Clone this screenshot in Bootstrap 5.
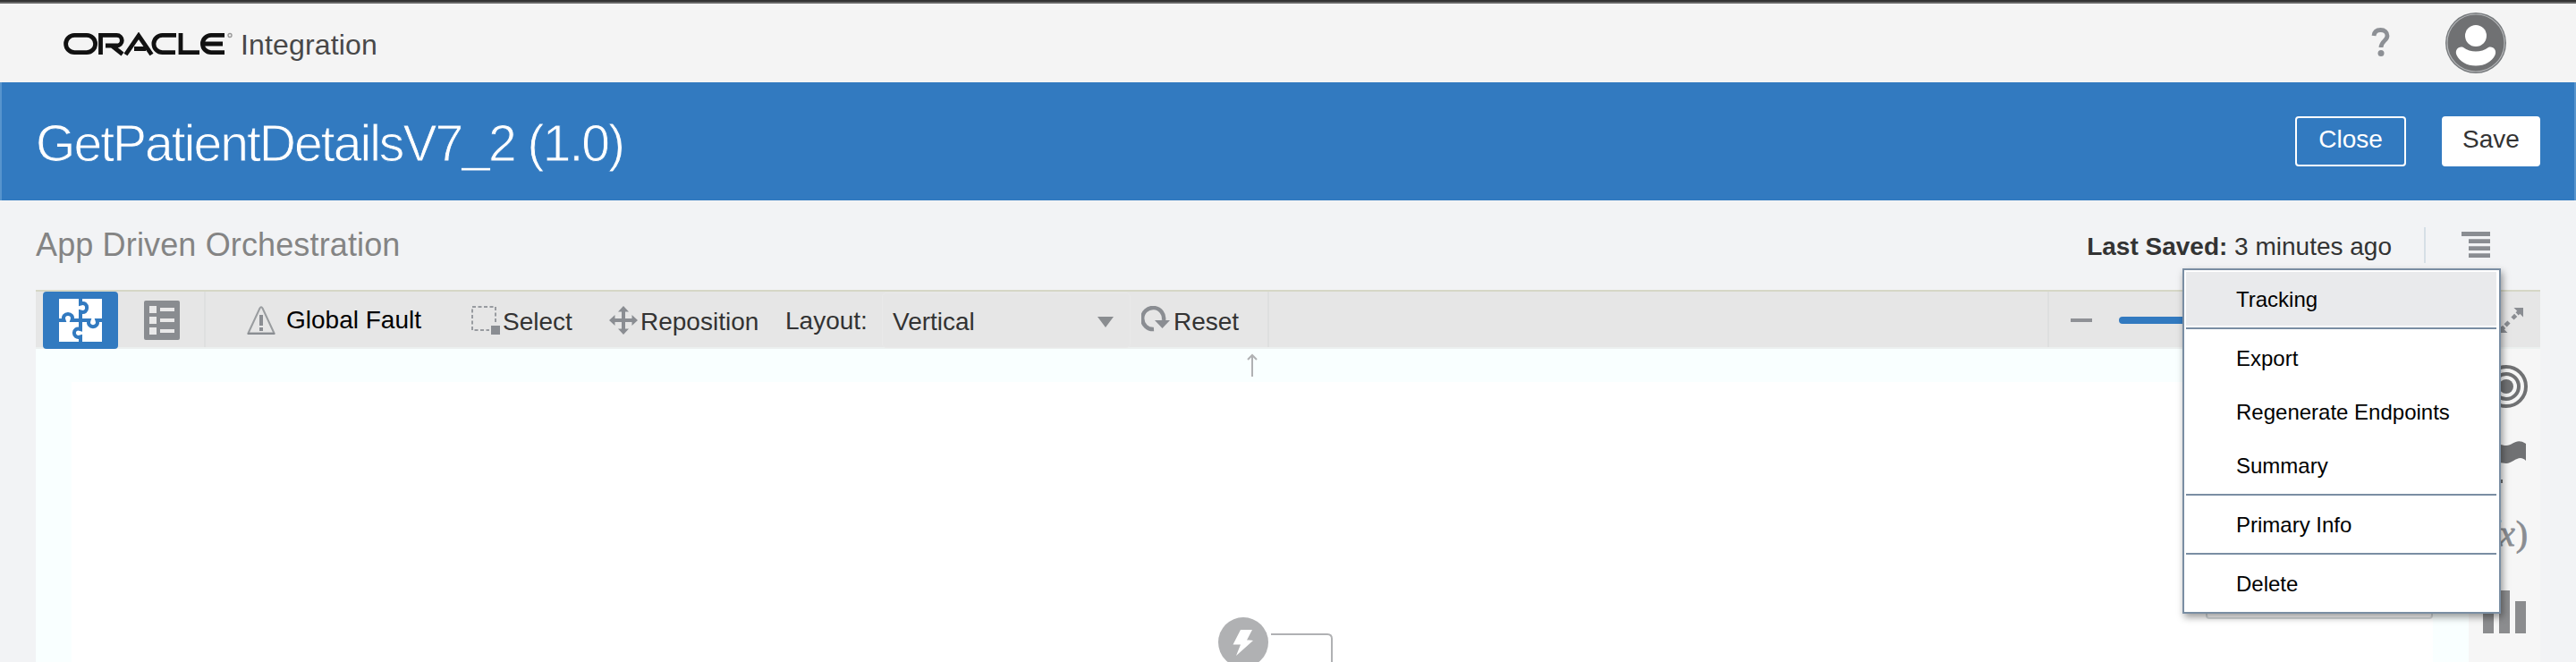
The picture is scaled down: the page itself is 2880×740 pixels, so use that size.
<!DOCTYPE html>
<html lang="en">
<head>
<meta charset="utf-8">
<title>Oracle Integration</title>
<link href="https://cdn.jsdelivr.net/npm/bootstrap@5.3.0/dist/css/bootstrap.min.css" rel="stylesheet">
<style>
  body { font-family: "Liberation Sans", Arial, sans-serif; background: #f2f3f5; color: #333; font-size: 28px; line-height: 1; width: 2880px; height: 740px; overflow: hidden; }
  svg { display: block; flex: none; }
  .topbar { height: 92px; background: #f4f4f4; border-top: 2px solid #333; box-shadow: inset 0 2px #666; padding: 0 78px 0 70px; }
  .product { font-size: 32px; color: #484848; margin-left: 9px; padding-top: 6px; letter-spacing: .15px; }
  .titlebar { height: 132px; background: #327ac0; padding: 0 40px; }
  .titlebar h1 { font-size: 57px; line-height: 64px; font-weight: 400; color: #fff; margin: 3px 0 0; letter-spacing: -1.95px; -webkit-text-stroke: .9px #327ac0; }
  .titlebar .btn { height: 56px; border: 2px solid #fff; border-radius: 4px; font-size: 28px; line-height: 46px; padding: 0 0 4px; --bs-btn-color: #fff; }
  .btn-close-flow { width: 124px; }
  .titlebar .btn-save { width: 110px; background: #fff; color: #333; }
  .subbar { height: 100px; padding: 0 40px; }
  .subtitle { font-size: 36px; color: #848484; padding-top: 32px; letter-spacing: .14px; }
  .saved { padding-top: 38px; }
  .vline { width: 2px; height: 40px; background: #d6dfe6; margin: 30px 40px 0 36px; }
  .tools { height: 66px; margin: 0 40px; background: #e6e6e6; border-top: 2px solid #d6d7c6; border-bottom: 2px solid #ecf0ef; }
  .tools > * { flex: none; }
  .mode { width: 84px; height: 64px; margin: 0 0 -2px 8px; background: #327ac0; border-radius: 4px; padding: 8px 18px; }
  .sep { width: 2px; height: 62px; background: #dedfdf; }
  .lbl { line-height: 32px; white-space: nowrap; }
  .pick { width: 276px; height: 60px; border-radius: 4px; padding: 0 18px 0 11px; box-shadow: 0 0 0 1px #e9e9e9; }
  .stage { height: 350px; margin: 0 40px; background: #f9ffff; padding-left: 40px; }
  .sheet { width: 2640px; margin-top: 37px; background: #fff; }
  .rail { width: 80px; margin-left: 40px; background: #f6f6f6; }
  .flow { left: 1340px; top: 390px; }
  .zoombox { left: 2466px; top: 640px; width: 254px; height: 52px; border: 2px solid #d8dcde; border-radius: 4px; }
  .railicons { left: 2760px; top: 390px; }
  .flowmenu { left: 2440px; top: 300px; width: 356px; height: 386px; border: 2px solid #7a8ea3; border-radius: 0; background: #fff; padding: 2px 3px 2px 2px; box-shadow: 2px 4px 8px rgba(0,0,0,.4); font-size: 24px; color: #000; z-index: 5; }
  .flowmenu .dropdown-item { height: 60px; line-height: 61px; padding: 0 0 0 56px; color: #000; }
  .flowmenu .dropdown-item.hot { background: #e9eaec; }
  .flowmenu .dropdown-divider { height: 2px; margin: 2px 0; border: 0; background: #7a8ea3; opacity: 1; }
  .edge { top: 92px; width: 2px; height: 132px; background: #5794cd; }
</style>
</head>
<body class="position-relative">
<header class="topbar d-flex align-items-center">
  <svg width="190" height="28" viewBox="0 0 190 28" fill="none" stroke="#111" stroke-width="4.8" style="margin-top:6px">
    <rect x="3.600" y="3.400" width="33" height="19.200" rx="9.600"/>
    <path d="M42.500 25V3.400H60.500a5.800 5.800 0 0 1 0 11.600H48M55 15L67 24.500"/>
    <path d="M70.500 25L85 3.800L99.500 25M80 18.500H93"/>
    <path d="M127 3.400H111.500a9.600 9.600 0 0 0 0 19.200H126"/>
    <path d="M132 1V22.600H153"/>
    <path d="M181 3.400H166a9.600 9.600 0 0 0 0 19.200H181M157 13H179"/>
    <circle cx="187" cy="3.500" r="2" stroke="#999" stroke-width="1.400"/>
  </svg>
  <div class="product">Integration</div>
  <svg class="ms-auto" width="22" height="34" viewBox="0 0 22 34" style="margin-top:0;margin-right:61px" fill="none" stroke="#8d9095" stroke-width="4.800"><path d="M3 10C3.500 5 7 3.500 10.500 3.500C15 3.500 18 6 18 10C18 15.500 11 16 11 23"/><circle cx="11" cy="29.500" r="3.500" fill="#8d9095" stroke="none"/></svg>
  <svg width="68" height="68" viewBox="0 0 68 68" style="margin-top:2px"><circle cx="34" cy="34" r="34" fill="#777a7d"/><circle cx="34" cy="34" r="32" fill="#707173" stroke="#b4b6b8" stroke-width="1.2"/><circle cx="34" cy="26" r="12" fill="#fff"/><path d="M20 39C24 42 29 43.500 34 43.500S44 42 48 39C53 37 58 42 55.500 47.500C52 55 44 59.500 34 59.500S16 55 12.500 47.500C10 42 15 37 20 39Z" fill="#fff"/></svg>
</header>
<section class="titlebar d-flex align-items-center">
  <h1>GetPatientDetailsV7_2 (1.0)</h1>
  <button class="btn btn-close-flow ms-auto">Close</button>
  <button class="btn btn-save" style="margin-left:40px">Save</button>
</section>
<section class="subbar d-flex">
  <div class="subtitle">App Driven Orchestration</div>
  <div class="saved ms-auto"><b>Last Saved:</b> 3 minutes ago</div>
  <div class="vline"></div>
  <svg width="32" height="30" viewBox="0 0 32 30" style="margin:35px 56px 0 0" fill="#8a8d92"><path d="M0 0H32V5H0ZM8 8.300H32V13H8ZM8 16.300H32V21H8ZM8 24.300H32V29H8Z"/></svg>
</section>
<nav class="tools d-flex align-items-start">
  <div class="mode"><svg width="48" height="48" viewBox="0 0 48 48"><path d="M0 0H48V48H0Z" fill="#fff"/><g fill="none" stroke="#327ac0" stroke-width="4"><path d="M24 0V5.500C33.500 2 33.500 18 24 14.500V34C14.500 30.500 14.500 45.500 24 42.500V48M0 24H5.500C2 14.500 18 14.500 14.500 24H33.500C30 33.500 46 33.500 42.500 24H48"/></g></svg></div>
  <svg width="40" height="44" viewBox="0 0 40 44" style="margin:10px 27px 0 29px"><rect width="40" height="44" rx="2" fill="#898c90"/><path fill="#e9e9e9" d="M6 6h8v8H6zM6 18h8v8H6zM6 30h8v8H6zM18 8h16v4H18zM18 20h16v4H18zM18 32h16v4H18z"/></svg>
  <div class="sep"></div>
  <svg width="32" height="32" viewBox="0 0 32 32" style="margin:16px 12px 0 46px" fill="none" stroke="#999c9f" stroke-width="2"><path d="M1.500 30.500L14.500 2.500Q16 0 17.500 2.500L30.500 30.500Z"/><path d="M1 31H31" stroke="#8a8d92"/><path d="M16 10V22M16 24V28" stroke="#8a8d92" stroke-width="4"/></svg>
  <span class="lbl text-black" style="margin-top:16px;width:207px">Global Fault</span>
  <svg width="32" height="32" viewBox="0 0 32 32" style="margin-top:16px"><path d="M1 1H27V27H1Z" fill="none" stroke="#989ba0" stroke-width="2" stroke-dasharray="4 2.500"/><path d="M20 20H32V32H20Z" fill="#e6e6e6"/><path d="M22 22H32V32H22Z" fill="#8a8d92"/></svg>
  <span class="lbl" style="margin:18px 0 0 3px;width:119px">Select</span>
  <svg width="32" height="32" viewBox="0 0 32 32" style="margin-top:16px" fill="#8a8d92"><path d="M14 6H18V14H26V18H18V26H14V18H6V14H14Z"/><path d="M16 0L22 6.500H10ZM16 32L22 25.500H10ZM0 16L6.500 10V22ZM32 16L25.500 10V22Z"/></svg>
  <span class="lbl" style="margin:18px 0 0 3px;width:162px">Reposition</span>
  <span class="lbl" style="margin-top:17px;width:109px">Layout:</span>
  <div class="pick d-flex align-items-center justify-content-between" style="margin-top:2px"><span class="lbl" style="padding-top:4px">Vertical</span><svg width="18" height="12" viewBox="0 0 18 12" style="margin-top:4px"><path d="M0 0H18L9 12Z" fill="#8a8d90"/></svg></div>
  <svg width="32" height="32" viewBox="0 0 32 32" style="margin:16px 0 0 13px"><path d="M14 26A12 12 0 1 1 25 16" fill="none" stroke="#8a8d92" stroke-width="4.500"/><path d="M15 16H32L23.500 25Z" fill="#8a8d92"/></svg>
  <span class="lbl" style="margin:18px 0 0 4px;width:105px">Reset</span>
  <div class="sep"></div>
  <div class="sep" style="margin-left:870px"></div>
  <svg width="24" height="4" style="margin:30px 30px 0 24px"><path d="M0 0H24V4H0Z" fill="#8f9196"/></svg>
  <div style="width:200px;height:8px;margin-top:28px;border-radius:4px;background:#327ac0"></div>
  <svg width="30" height="30" viewBox="0 0 30 30" style="margin:17px 0 0 223px" fill="#8a8d92"><path d="M18.500 1H29V11.500ZM1 18.500V29H11.500Z"/><path d="M26 4L17 13M13 17L4 26" stroke="#8a8d92" stroke-width="4.500" stroke-dasharray="5.500 2 6"/></svg>
</nav>
<main class="stage d-flex">
  <div class="sheet"></div>
  <aside class="rail"></aside>
</main>
<svg class="flow position-absolute" width="160" height="350" viewBox="0 0 160 350" fill="none">
  <path d="M60 31V8M55 12L60 7L65 12" stroke="#b0b1b3" stroke-width="2"/>
  <circle cx="50" cy="328" r="28" fill="#b0b1b3"/>
  <path d="M47 313.500H60L54 325H56.500L61 325.500L42 342.500L47 330H38.500Z" fill="#fff" transform="translate(0 .5)"/>
  <path d="M81 319H144Q149 319 149 324V350" stroke="#b0b1b3" stroke-width="2"/>
</svg>
<div class="zoombox position-absolute"></div>
<svg class="railicons position-absolute" width="80" height="350" viewBox="0 0 80 350">
  <g fill="none" stroke="#707173" stroke-width="4"><circle cx="42" cy="42" r="22"/><circle cx="42" cy="42" r="14"/></g><circle cx="42" cy="42" r="8" fill="#707173"/>
  <path fill="#707173" d="M18 107C26 101 34 108 42 108S53 99 64 106V125C56 117 50 128 42 128S26 123 22 127V146H38V150H18Z"/>
  <text x="66" y="220" text-anchor="end" font-family="Liberation Serif, serif" font-size="40" font-style="italic" fill="#8a8d92" stroke="#8a8d92" stroke-width=".8">(x<tspan font-style="normal" dx="1">)</tspan></text>
  <path fill="#8b8c8e" d="M16 294h12v24H16zM34 270h12v48H34zM52 282h12v36H52z"/>
</svg>
<div class="flowmenu dropdown-menu d-block position-absolute">
  <a class="dropdown-item hot">Tracking</a>
  <hr class="dropdown-divider">
  <a class="dropdown-item">Export</a>
  <a class="dropdown-item">Regenerate Endpoints</a>
  <a class="dropdown-item">Summary</a>
  <hr class="dropdown-divider">
  <a class="dropdown-item">Primary Info</a>
  <hr class="dropdown-divider">
  <a class="dropdown-item">Delete</a>
</div>
<div class="edge position-absolute start-0"></div>
<div class="edge position-absolute end-0"></div>
<script src="https://cdn.jsdelivr.net/npm/bootstrap@5.3.0/dist/js/bootstrap.bundle.min.js"></script>
</body>
</html>
